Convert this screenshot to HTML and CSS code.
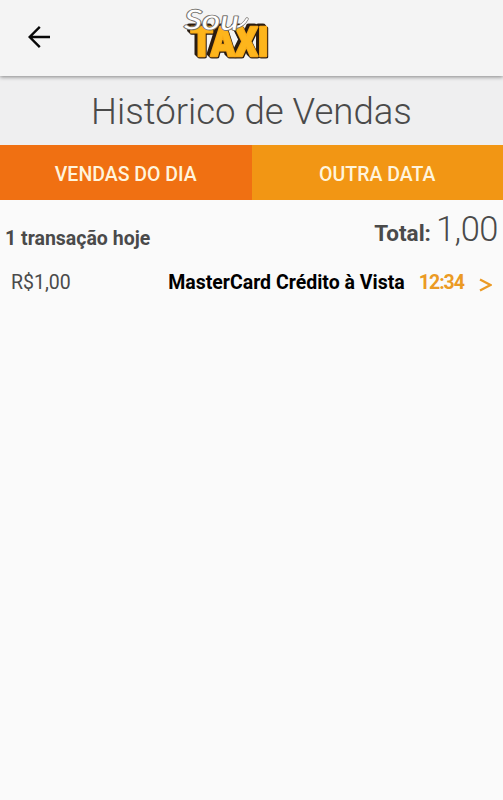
FILE: index.html
```html
<!DOCTYPE html>
<html lang="pt-BR">
<head>
<meta charset="utf-8">
<title>Histórico de Vendas</title>
<link rel="stylesheet" href="styles.css">
</head>
<body>
<header class="appbar">
  <svg class="back" viewBox="0 0 24 24" width="24" height="24"><path d="M23 12H3M12.8 1.9L2.7 12l10.1 10.1" fill="none" stroke="#080808" stroke-width="2.4"/></svg>
  <svg class="logo" width="110" height="72" viewBox="0 0 110 72">
    <text class="taxi" x="14.5" y="53.5" textLength="78" lengthAdjust="spacingAndGlyphs">TAXI</text>
    <path class="swash" d="M61 25Q67 24 71 17"/>
    <path class="swash-fill" d="M60 25Q67 24 71 17"/>
    <text class="sou" x="8" y="27" textLength="55" lengthAdjust="spacingAndGlyphs" transform="rotate(1 8 27)">Sou</text>
  </svg>
</header>
<main>
  <h1 class="title"><span>Histórico de Vendas</span></h1>
  <nav class="tabs">
    <a class="tab active"><span>VENDAS DO DIA</span></a>
    <a class="tab"><span>OUTRA DATA</span></a>
  </nav>
  <section class="summary">
    <span class="count">1 transação hoje</span>
    <span class="total"><b>Total:</b><span class="amount">1,00</span></span>
  </section>
  <section class="sale">
    <span class="price">R$1,00</span>
    <span class="method">MasterCard Crédito à Vista</span>
    <span class="time">12:34</span>
    <svg class="chevron" width="13" height="14" viewBox="0 0 13 14"><path d="M1 1.5L11.5 7L1 12.5" fill="none" stroke="#eb9a24" stroke-width="2.2"/></svg>
  </section>
</main>
</body>
</html>
```
FILE: styles.css
```css
* { box-sizing: border-box; }
body {
  margin: 0;
  min-height: 800px;
  background: #fafafa;
  color: #4a4a4a;
  font-family: Roboto, sans-serif;
}
.appbar {
  position: relative;
  display: flex;
  align-items: flex-start;
  height: 76px;
  background: #f4f4f4;
  box-shadow: 0 1px 4px rgba(0, 0, 0, .45);
}
.back { margin: 25px 0 0 27px; }
.logo { margin: 2px 0 0 125px; }
.taxi {
  font: 900 41px Roboto, sans-serif;
  fill: #fdb51c;
  stroke: #f9a916;
  stroke-width: 2.4px;
  stroke-linejoin: round;
  paint-order: stroke;
  filter: drop-shadow(1.2px 1.2px 0 #2a1c10) drop-shadow(-1.2px -1.2px 0 #2a1c10) drop-shadow(-0.6px 0.6px 0 #2a1c10);
}
.sou {
  font: italic 400 27px Lato, sans-serif;
  fill: #fff;
  stroke: #77736e;
  stroke-width: 1.8px;
  stroke-linejoin: round;
  paint-order: stroke;
}
.swash, .swash-fill { fill: none; stroke-linecap: round; }
.swash { stroke: #77736e; stroke-width: 3.4px; }
.swash-fill { stroke: #fff; stroke-width: 2px; }
.title {
  display: flex;
  justify-content: center;
  height: 69px;
  margin: 0;
  padding-top: 14px;
  background: #efeff0;
  color: #4a4a4a;
  font-size: 36.6px;
  font-weight: 300;
  line-height: 44px;
}
.tabs { display: flex; height: 55px; }
.tab {
  flex: 1;
  display: flex;
  align-items: center;
  justify-content: center;
  padding-top: 3px;
  background: #f29614;
  color: #fff4dc;
  font-size: 19.5px;
  font-weight: 500;
}
.tab.active { background: #f07012; }
.summary {
  display: flex;
  justify-content: space-between;
  align-items: baseline;
  height: 64px;
  padding: 9px 5px 0;
}
.count { font-size: 19.5px; font-weight: 700; position: relative; top: 4px; }
.total { display: flex; align-items: baseline; }
.total b { font-size: 22.5px; }
.amount { margin-left: 5px; font-size: 34.5px; font-weight: 300; letter-spacing: -0.5px; }
.sale {
  display: flex;
  align-items: center;
  height: 37px;
  padding: 0 11px;
  font-size: 19.5px;
}
.method { margin-left: auto; color: #000; font-weight: 700; }
.time { margin-left: 14px; color: #eb9a24; font-weight: 700; letter-spacing: -1px; }
.chevron { margin: 4px 0 0 15px; }
```
